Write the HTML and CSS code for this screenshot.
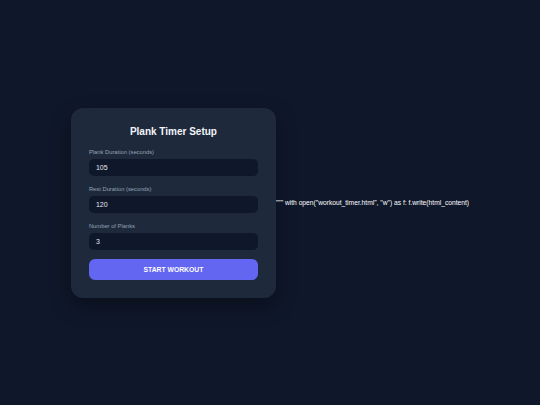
FILE: index.html
```html
<!DOCTYPE html>
<html>
<head>
<meta charset="utf-8">
<title>Plank Timer</title>
<link rel="stylesheet" href="styles.css">
</head>
<body>
<div class="card">
  <h1>Plank Timer Setup</h1>
  <div class="field">
    <label for="plank">Plank Duration (seconds)</label>
    <input type="number" id="plank" value="105">
  </div>
  <div class="field">
    <label for="rest">Rest Duration (seconds)</label>
    <input type="number" id="rest" value="120">
  </div>
  <div class="field">
    <label for="count">Number of Planks</label>
    <input type="number" id="count" value="3">
  </div>
  <button class="start">Start Workout</button>
</div>
""" with open("workout_timer.html", "w") as f: f.write(html_content)
</body>
</html>
```
FILE: styles.css
```css
body {
	margin: 0;
	height: 100vh;
	display: flex;
	justify-content: center;
	align-items: center;
	background: #0f172a;
	color: #ffffff;
	font-family: "Liberation Sans", Arial, sans-serif;
	font-size: 6.7px;
}

.card {
	width: 169px;
	padding: 18px;
	background: #1e293b;
	border-radius: 12px;
	box-shadow: 0 8px 20px rgba(0, 0, 0, 0.35);
}

h1 {
	margin: 0 0 10px 0;
	text-align: center;
	font-size: 10px;
	line-height: 12px;
	font-weight: bold;
	color: #f1f5f9;
}

.field {
	margin-bottom: 9px;
}

label {
	display: block;
	margin-bottom: 3px;
	font-size: 5.8px;
	line-height: 8px;
	color: #94a3b8;
}

input {
	display: block;
	box-sizing: border-box;
	width: 100%;
	height: 17px;
	padding: 0 7px;
	border: none;
	border-radius: 5px;
	background: #0f172a;
	color: #e2e8f0;
	font-family: inherit;
	font-size: 7px;
	outline: none;
	-moz-appearance: textfield;
}

input::-webkit-outer-spin-button,
input::-webkit-inner-spin-button {
	-webkit-appearance: none;
	margin: 0;
}

.start {
	display: block;
	width: 100%;
	height: 21px;
	margin-top: 1px;
	border: none;
	border-radius: 6px;
	background: #6366f1;
	color: #fff;
	font-family: inherit;
	font-size: 6.8px;
	font-weight: bold;
	text-transform: uppercase;
	cursor: pointer;
}
```
